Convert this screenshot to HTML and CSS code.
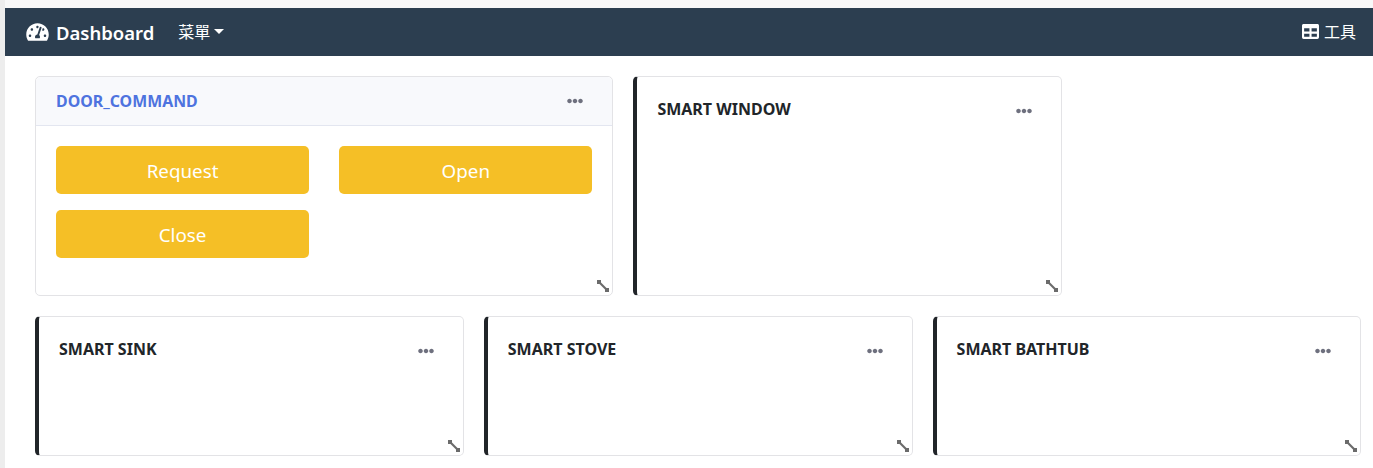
FILE: index.html
```html
<!DOCTYPE html>
<html lang="zh-Hant">
<head>
<meta charset="utf-8">
<title>Dashboard</title>
<link rel="stylesheet" href="styles.css">
</head>
<body>
<div class="app">
  <nav class="navbar">
    <a class="brand">
      <svg class="brand-icon" viewBox="0 0 576 512"><path fill="currentColor" d="M288 32C128.94 32 0 160.94 0 320c0 52.8 14.25 102.26 39.06 144.8 5.61 9.62 16.3 15.2 27.44 15.2h443c11.14 0 21.83-5.58 27.44-15.2C561.75 422.26 576 372.8 576 320c0-159.06-128.94-288-288-288zm0 64c14.71 0 26.58 10.13 30.32 23.65-1.11 2.26-2.64 4.23-3.45 6.67l-9.22 27.67c-5.13 3.49-10.97 6.01-17.64 6.01-17.67 0-32-14.33-32-32S270.33 96 288 96zM96 384c-17.67 0-32-14.33-32-32s14.33-32 32-32 32 14.33 32 32-14.33 32-32 32zm48-160c-17.67 0-32-14.33-32-32s14.33-32 32-32 32 14.33 32 32-14.33 32-32 32zm246.77-72.41l-61.33 184C343.13 347.33 352 364.54 352 384c0 11.72-3.38 22.55-8.88 32H232.88c-5.5-9.45-8.88-20.28-8.88-32 0-33.94 26.5-61.43 59.9-63.59l61.34-184.01c4.17-12.56 17.73-19.45 30.36-15.17 12.57 4.19 19.35 17.77 15.17 30.36zm14.66 57.2l15.52-46.55c3.47-1.29 7.13-2.23 11.05-2.23 17.67 0 32 14.33 32 32s-14.33 32-32 32c-11.38-.01-20.89-6.28-26.57-15.22zM480 384c-17.67 0-32-14.33-32-32s14.33-32 32-32 32 14.33 32 32-14.33 32-32 32z"/></svg>
      <span>Dashboard</span>
    </a>
    <a class="menu">菜單<i class="caret"></i></a>
    <a class="tools">
      <svg class="tools-icon" viewBox="0 0 512 512"><path fill="currentColor" d="M464 32H48C21.49 32 0 53.49 0 80v352c0 26.51 21.49 48 48 48h416c26.51 0 48-21.49 48-48V80c0-26.51-21.49-48-48-48zM224 416H64v-96h160v96zm0-160H64v-96h160v96zm224 160H288v-96h160v96zm0-160H288v-96h160v96z"/></svg>
      <span>工具</span>
    </a>
  </nav>
  <main class="grid">
    <section class="card card-wide">
      <header class="card-header">
        <h2 class="door-title">DOOR_COMMAND</h2>
        <svg class="dots" viewBox="0 0 512 512"><path fill="currentColor" d="M328 256c0 39.8-32.2 72-72 72s-72-32.2-72-72 32.2-72 72-72 72 32.2 72 72zm104-72c-39.8 0-72 32.2-72 72s32.2 72 72 72 72-32.2 72-72-32.2-72-72-72zm-352 0c-39.8 0-72 32.2-72 72s32.2 72 72 72 72-32.2 72-72-32.2-72-72-72z"/></svg>
      </header>
      <div class="buttons">
        <button class="btn">Request</button>
        <button class="btn">Open</button>
        <button class="btn">Close</button>
      </div>
      <svg class="resize" viewBox="0 0 12 12"><path d="M2 2 10 10" stroke="currentColor" stroke-width="2.2"/><path fill="currentColor" d="M0 0h4v4H0zM8 8h4v4H8z"/></svg>
    </section>
    <section class="card card-stripe">
      <header class="stripe-header">
        <h2 class="stripe-title">SMART WINDOW</h2>
        <svg class="dots" viewBox="0 0 512 512"><path fill="currentColor" d="M328 256c0 39.8-32.2 72-72 72s-72-32.2-72-72 32.2-72 72-72 72 32.2 72 72zm104-72c-39.8 0-72 32.2-72 72s32.2 72 72 72 72-32.2 72-72-32.2-72-72-72zm-352 0c-39.8 0-72 32.2-72 72s32.2 72 72 72 72-32.2 72-72-32.2-72-72-72z"/></svg>
      </header>
      <svg class="resize" viewBox="0 0 12 12"><path d="M2 2 10 10" stroke="currentColor" stroke-width="2.2"/><path fill="currentColor" d="M0 0h4v4H0zM8 8h4v4H8z"/></svg>
    </section>
    <section class="card card-stripe card-third">
      <header class="stripe-header">
        <h2 class="stripe-title">SMART SINK</h2>
        <svg class="dots" viewBox="0 0 512 512"><path fill="currentColor" d="M328 256c0 39.8-32.2 72-72 72s-72-32.2-72-72 32.2-72 72-72 72 32.2 72 72zm104-72c-39.8 0-72 32.2-72 72s32.2 72 72 72 72-32.2 72-72-32.2-72-72-72zm-352 0c-39.8 0-72 32.2-72 72s32.2 72 72 72 72-32.2 72-72-32.2-72-72-72z"/></svg>
      </header>
      <svg class="resize" viewBox="0 0 12 12"><path d="M2 2 10 10" stroke="currentColor" stroke-width="2.2"/><path fill="currentColor" d="M0 0h4v4H0zM8 8h4v4H8z"/></svg>
    </section>
    <section class="card card-stripe card-third">
      <header class="stripe-header">
        <h2 class="stripe-title">SMART STOVE</h2>
        <svg class="dots" viewBox="0 0 512 512"><path fill="currentColor" d="M328 256c0 39.8-32.2 72-72 72s-72-32.2-72-72 32.2-72 72-72 72 32.2 72 72zm104-72c-39.8 0-72 32.2-72 72s32.2 72 72 72 72-32.2 72-72-32.2-72-72-72zm-352 0c-39.8 0-72 32.2-72 72s32.2 72 72 72 72-32.2 72-72-32.2-72-72-72z"/></svg>
      </header>
      <svg class="resize" viewBox="0 0 12 12"><path d="M2 2 10 10" stroke="currentColor" stroke-width="2.2"/><path fill="currentColor" d="M0 0h4v4H0zM8 8h4v4H8z"/></svg>
    </section>
    <section class="card card-stripe card-third">
      <header class="stripe-header">
        <h2 class="stripe-title">SMART BATHTUB</h2>
        <svg class="dots" viewBox="0 0 512 512"><path fill="currentColor" d="M328 256c0 39.8-32.2 72-72 72s-72-32.2-72-72 32.2-72 72-72 72 32.2 72 72zm104-72c-39.8 0-72 32.2-72 72s32.2 72 72 72 72-32.2 72-72-32.2-72-72-72zm-352 0c-39.8 0-72 32.2-72 72s32.2 72 72 72 72-32.2 72-72-32.2-72-72-72z"/></svg>
      </header>
      <svg class="resize" viewBox="0 0 12 12"><path d="M2 2 10 10" stroke="currentColor" stroke-width="2.2"/><path fill="currentColor" d="M0 0h4v4H0zM8 8h4v4H8z"/></svg>
    </section>
  </main>
</div>
</body>
</html>
```
FILE: styles.css
```css
* { box-sizing: border-box; }
html, body { height: 100%; }
body {
  margin: 0;
  height: 468px;
  overflow: hidden;
  background: #ededed;
  font-family: "Noto Sans", "Open Sans", "Noto Sans CJK TC", sans-serif;
}
.app {
  margin: 8px 0 0 5px;
  height: 460px;
  background: #fff;
  box-shadow: 0 -8px 0 #f8f8f8;
}
.navbar {
  display: flex;
  align-items: center;
  height: 48px;
  padding: 0 17px 0 21px;
  background: #2c3e50;
  color: #fff;
}
.brand {
  display: flex;
  align-items: center;
  gap: 7px;
  font-size: 18.500px;
  font-weight: 600;
}
.brand-icon { width: 23px; height: 20px; margin-top: -1px; }
.menu {
  display: flex;
  align-items: center;
  margin: -2px 0 0 24px;
  font-size: 16px;
  font-family: "Noto Sans CJK TC", sans-serif;
}
.caret {
  margin: 0 0 0 4px;
  border-top: 5px solid #fff;
  border-left: 5px solid transparent;
  border-right: 5px solid transparent;
}
.tools {
  display: flex;
  align-items: center;
  gap: 5px;
  margin: -1px 0 0 auto;
  font-size: 16px;
  font-family: "Noto Sans CJK TC", sans-serif;
}
.tools span { margin-top: -2px; }
.tools-icon { width: 17px; height: 17px; }
.grid {
  display: grid;
  grid-template-columns: repeat(9, 1fr);
  grid-template-rows: 220px 140px;
  gap: 20px;
  padding: 20px 11.600px 0 30px;
}
.card {
  position: relative;
  grid-column: span 3;
  background: #fff;
  border: 1px solid #e3e3e6;
  border-radius: 5px;
}
.card-wide { grid-column: span 4; }
.card-stripe { border-left: 4px solid #212529; }
.card-header {
  display: flex;
  align-items: center;
  justify-content: space-between;
  height: 49px;
  padding: 0 20px;
  background: #f8f9fc;
  border-bottom: 1px solid #e3e6f0;
  border-radius: 5px 5px 0 0;
}
.door-title {
  margin: 0;
  font-size: 15.900px;
  font-weight: 700;
  color: #4e73df;
}
.dots { flex: none; width: 16px; height: 16px; color: #6e707e; margin-right: 9px; }
.buttons {
  display: grid;
  grid-template-columns: 1fr 1fr;
  gap: 16px 30px;
  padding: 20px 20px 0;
}
.btn {
  height: 48px;
  padding: 2px 0 0;
  border: 0;
  border-radius: 5px;
  background: #f5bf26;
  color: #fff;
  font: 400 18.800px "Noto Sans", "Open Sans", sans-serif;
}
.stripe-header {
  display: flex;
  align-items: flex-start;
  justify-content: space-between;
  padding: 22px 20px 0;
}
.stripe-title {
  margin: 0;
  font-size: 16px;
  line-height: 21px;
  font-weight: 700;
  color: #212529;
}
.stripe-header .dots { margin-top: 4px; }
.resize {
  position: absolute;
  right: 3px;
  bottom: 3px;
  width: 12px;
  height: 12px;
  color: #6b6b6b;
}
```
